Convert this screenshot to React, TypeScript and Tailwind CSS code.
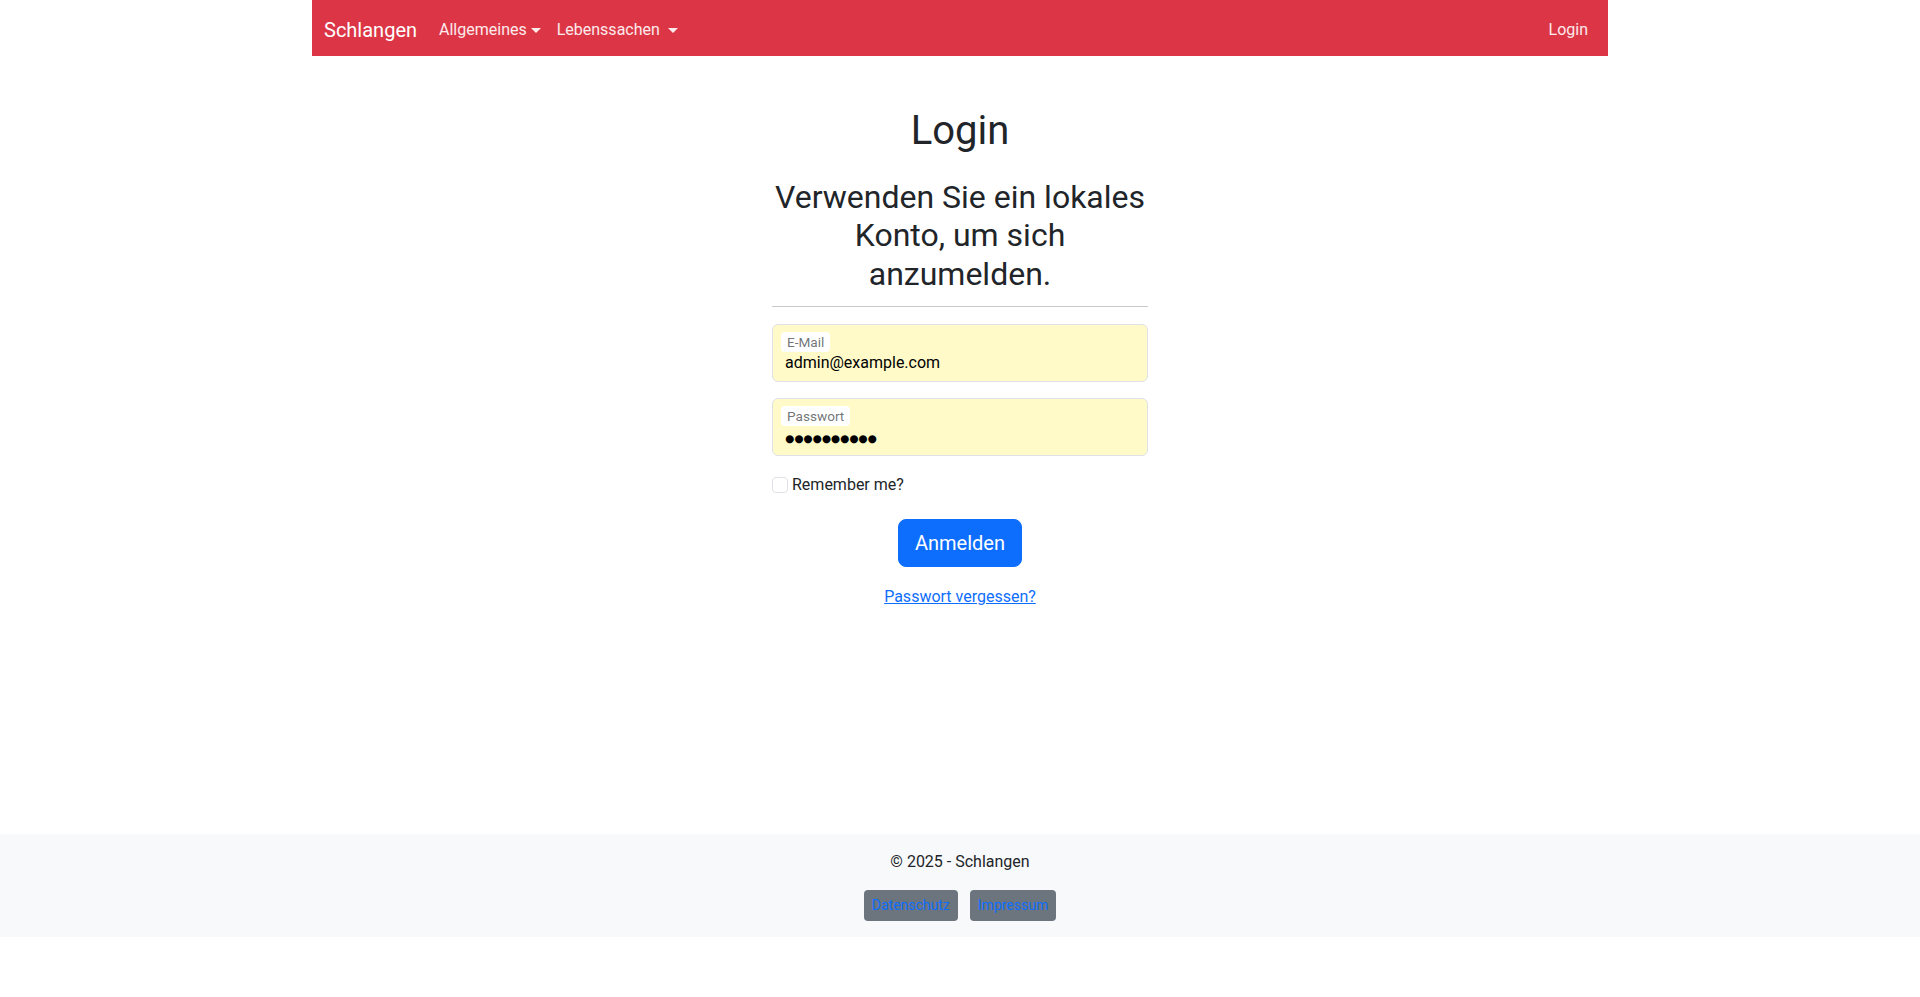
// Login page: red navbar, centered local-account form, light footer
function Caret() {
  return <span className="ml-[4px] inline-block border-x-[5px] border-t-[5px] border-x-transparent border-t-current align-middle" />;
}

function FloatingField({ label, children }: { label: string; children: React.ReactNode }) {
  return (
    <div className="relative h-[58px] rounded-[6px] border border-[#dee2e6] bg-[#fffac8]">
      <span className="absolute left-[8px] top-[7px] rounded-[4px] bg-white px-[6px] text-[13.6px] leading-[20px] text-[#212529]/65">
        {label}
      </span>
      <div className="px-[12px] pt-[26px] text-[16px] leading-[24px] text-black">{children}</div>
    </div>
  );
}

export default function App() {
  return (
    <div className="min-h-[997px] bg-white font-['Roboto',sans-serif] text-[#212529]">
      {/* navbar */}
      <div className="mx-auto w-[1320px] px-3">
        <nav className="flex h-14 items-center bg-[#dc3545] px-3 pt-[4px] text-white">
          <span className="mr-[14px] text-[20px] leading-[30px] text-white">Schlangen</span>
          <div className="flex items-center text-[16px] leading-[24px] text-white/90">
            <span className="flex items-center px-[8px]">
              Allgemeines
              <Caret />
            </span>
            <span className="flex items-center px-[8px]">
              Lebenssachen&nbsp;
              <Caret />
            </span>
          </div>
          <span className="ml-auto px-[8px] text-[16px] leading-[24px] text-white/90">Login</span>
        </nav>
      </div>

      {/* main */}
      <main className="h-[778px] pt-[51px]">
        <div className="mx-auto w-[376px]">
          <h1 className="text-center text-[40px] leading-[48px] font-normal">Login</h1>
          <h2 className="mt-[23px] text-center text-[32px] leading-[38.4px] font-normal">
            Verwenden Sie ein lokales Konto, um sich anzumelden.
          </h2>
          <hr className="mt-[13px] border-t border-[#c8c9ca]" />

          <div className="mt-[17px]">
            <FloatingField label="E-Mail">admin@example.com</FloatingField>
          </div>
          <div className="mt-[16px]">
            <FloatingField label="Passwort">
              <span className="font-['DejaVu_Sans',sans-serif] text-[10.5px]">●●●●●●●●●●</span>
            </FloatingField>
          </div>

          <div className="mt-[17px] flex h-[24px] items-center gap-[4px]">
            <span className="h-[16px] w-[16px] rounded-[4px] border border-[#dee2e6] bg-white" />
            <span className="text-[16px] leading-[24px]">Remember me?</span>
          </div>

          <div className="mt-[22px] flex justify-center">
            <button className="rounded-[8px] border border-[#0d6efd] bg-[#0d6efd] px-[16px] py-[8px] text-[20px] leading-[30px] text-white">
              Anmelden
            </button>
          </div>

          <div className="mt-[18px] text-center text-[16px] leading-[24px]">
            <a className="text-[#0d6efd] underline">Passwort vergessen?</a>
          </div>
        </div>
      </main>

      {/* footer */}
      <footer className="bg-[#f8f9fa] pt-[16px] pb-[16px] text-center">
        <p className="text-[16px] leading-[24px]">© 2025 - Schlangen</p>
        <div className="mt-[16px] flex justify-center gap-[12px]">
          <span className="rounded-[4px] bg-[#6c757d] px-[8px] py-[5px] text-[14px] leading-[21px] text-[#0d6efd]">
            Datenschutz
          </span>
          <span className="rounded-[4px] bg-[#6c757d] px-[8px] py-[5px] text-[14px] leading-[21px] text-[#0d6efd]">
            Impressum
          </span>
        </div>
      </footer>
    </div>
  );
}
